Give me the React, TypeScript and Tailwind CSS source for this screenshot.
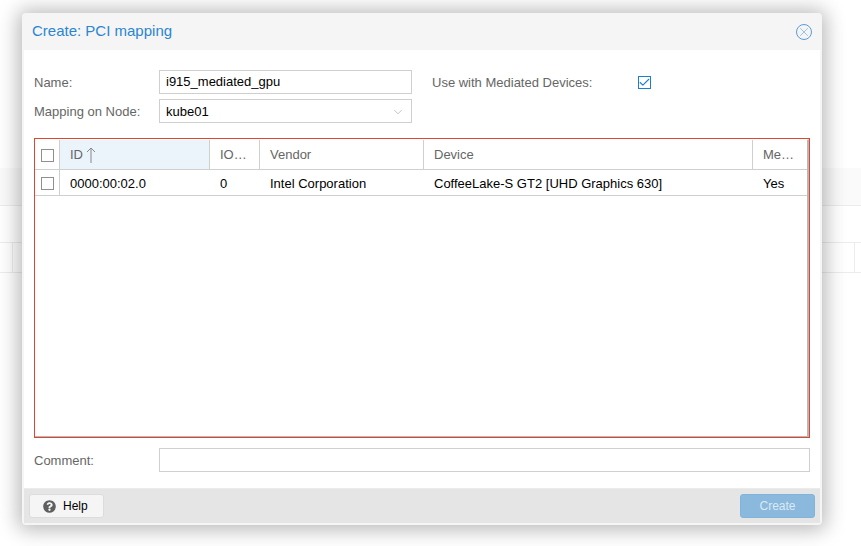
import { ChevronDown, Check, X } from 'lucide-react';
import { FaQuestionCircle } from 'react-icons/fa';

const columns = [
  { label: 'IO…', width: 'w-[50px] border-r' },
  { label: 'Vendor', width: 'w-[164px] border-r' },
  { label: 'Device', width: 'w-[329px] border-r' },
  { label: 'Me…', width: 'w-[54px]' },
];

const cells = [
  { label: '0', width: 'w-[50px]' },
  { label: 'Intel Corporation', width: 'w-[164px]' },
  { label: 'CoffeeLake-S GT2 [UHD Graphics 630]', width: 'w-[329px]' },
  { label: 'Yes', width: 'w-[54px]' },
];

function Box() {
  return <span className="block w-[13px] h-[13px] border border-[#8f8f8f] bg-white" />;
}

function Background() {
  return (
    <div className="h-[546px] bg-white">
      <div className="h-[168px]" />
      <div className="h-[38px] bg-[#fafafa] border-b border-[#ececec]" />
      <div className="h-[36px]" />
      <div className="h-[31px] border-y border-[#ececec] flex">
        <div className="w-[13px] border-r border-[#ececec]" />
        <div className="flex-1" />
        <div className="w-[7px] border-l border-[#ececec]" />
      </div>
    </div>
  );
}

export default function App() {
  return (
    <div className="relative w-[861px] h-[546px] overflow-hidden font-['Liberation_Sans',Arial,sans-serif] text-[13px]">
      <Background />

      <div className="absolute left-[22px] top-[13px] w-[800px] h-[512px] flex flex-col rounded-[4px] bg-[#f5f5f5] p-[2px] pt-0 shadow-[0_1px_20px_4px_rgba(0,0,0,0.28)]">
        <div className="h-[37px] shrink-0 flex items-center justify-between pl-[8px] pr-[8px]">
          <span className="text-[15px] text-[#2a86d1]">Create: PCI mapping</span>
          <span className="flex items-center justify-center w-[16px] h-[16px] rounded-full border border-[#5b9bd5] text-[#5b9bd5]">
            <X size={14} strokeWidth={1} />
          </span>
        </div>

        <div className="flex-1 flex flex-col bg-white px-[10px] pt-[20px]">
          <div className="flex">
            <div className="w-[398px]">
              <div className="flex items-center h-[24px]">
                <span className="w-[125px] pt-[2px] text-[#666666]">Name:</span>
                <div className="w-[253px] h-[24px] border border-[#cfcfcf] flex items-center px-[6px] text-black">i915_mediated_gpu</div>
              </div>
              <div className="flex items-center h-[24px] mt-[5px]">
                <span className="w-[125px] pt-[2px] text-[#666666]">Mapping on Node:</span>
                <div className="w-[253px] h-[24px] border border-[#cfcfcf] flex items-center justify-between pt-[1px] pl-[6px] pr-[6px] text-black">
                  kube01
                  <ChevronDown size={14} strokeWidth={1} className="text-[#9a9a9a]" />
                </div>
              </div>
            </div>
            <div className="flex items-center h-[24px]">
              <span className="w-[206px] pt-[2px] text-[#666666]">Use with Mediated Devices:</span>
              <span className="flex items-center justify-center w-[13px] h-[13px] border border-[#1a7fd0] text-[#1a7fd0]">
                <Check size={13} strokeWidth={2} className="shrink-0" />
              </span>
            </div>
          </div>

          <div className="mt-[15px] h-[300px] w-[776px] border border-[#d9482f] flex flex-col">
            <div className="flex-1 flex flex-col border-t border-r-2 border-b border-t-white border-r-[#b8b8b8] border-b-[#b8b8b8]">
              <div className="h-[30px] flex border-b border-[#cfcfcf] text-[#666666]">
                <div className="w-[25px] flex items-center justify-center pt-[2px] border-r border-[#cfcfcf]">
                  <Box />
                </div>
                <div className="w-[150px] flex items-center pl-[10px] bg-[#ebf3fb] border-r border-[#cfcfcf]">
                  ID
                  <svg width="10" height="16" viewBox="0 0 10 16" fill="none" stroke="#8a8a8a" strokeWidth="1" className="ml-[3px]">
                    <path d="M5 1v15M1 5l4-4 4 4" />
                  </svg>
                </div>
                {columns.map((col) => (
                  <div key={col.label} className={`${col.width} flex items-center pl-[10px] border-[#cfcfcf]`}>
                    {col.label}
                  </div>
                ))}
              </div>
              <div className="h-[26px] flex border-b border-[#cfcfcf] text-black">
                <div className="w-[25px] flex items-center justify-center pt-[2px] border-r border-[#cfcfcf]">
                  <Box />
                </div>
                <div className="w-[150px] flex items-center pl-[10px] pt-[2px]">0000:00:02.0</div>
                {cells.map((cell) => (
                  <div key={cell.label} className={`${cell.width} flex items-center pl-[10px] pt-[2px]`}>
                    {cell.label}
                  </div>
                ))}
              </div>
            </div>
          </div>

          <div className="mt-[10px] flex items-center h-[24px]">
            <span className="w-[125px] pt-[2px] text-[#666666]">Comment:</span>
            <div className="w-[651px] h-[24px] border border-[#cfcfcf]" />
          </div>
        </div>

        <div className="h-[35px] shrink-0 flex items-center justify-between bg-[#e5e5e5] border-t border-[#ebebeb] px-[5px]">
          <button className="w-[75px] h-[24px] flex items-center pl-[13px] gap-[7px] rounded-[3px] bg-[#f5f5f5] border border-[#dcdcdc] text-[12px] text-black">
            <FaQuestionCircle size={13} className="text-[#5f5f5f]" />
            Help
          </button>
          <button className="w-[75px] h-[24px] rounded-[3px] bg-[#8ab9dd] border border-[#82b4da] text-[12px] text-[#dbe9f4]">
            Create
          </button>
        </div>
      </div>
    </div>
  );
}
